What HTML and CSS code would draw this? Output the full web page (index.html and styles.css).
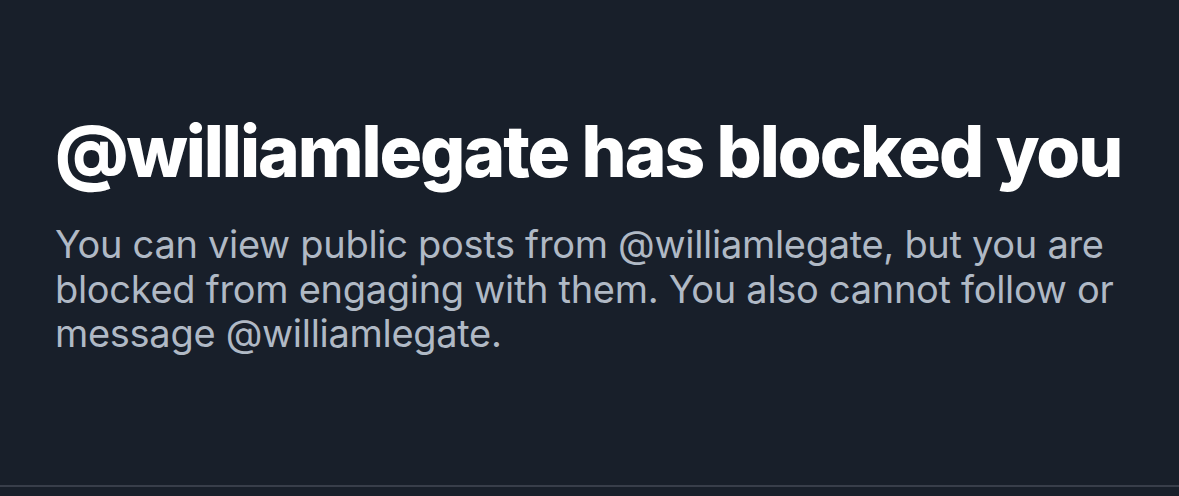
FILE: index.html
```html
<!DOCTYPE html>
<html>
<head>
<meta charset="utf-8">
<link rel="stylesheet" href="styles.css">
</head>
<body>
<main class="page">
  <section class="blocked">
    <h1 class="title">@williamlegate has blocked you</h1>
    <p class="desc">You can view public posts from @williamlegate, but you are blocked from engaging with them. You also cannot follow or message @williamlegate.</p>
  </section>
  <div class="divider"></div>
</main>
</body>
</html>
```
FILE: styles.css
```css
html, body {
  margin: 0;
  padding: 0;
  background: #181f2a;
}
.page {
  width: 1179px;
  height: 496px;
  display: flex;
  flex-direction: column;
}
.blocked {
  flex: 1;
  padding: 109px 40px 0 55px;
}
.title {
  margin: 0;
  font-family: Inter, "Liberation Sans", sans-serif;
  font-weight: 800;
  font-size: 71px;
  line-height: 84px;
  color: #ffffff;
  letter-spacing: -2.05px;
  white-space: nowrap;
}
.desc {
  margin: 29px 0 0;
  font-family: Inter, "Liberation Sans", sans-serif;
  font-weight: 400;
  font-size: 38px;
  line-height: 44.5px;
  letter-spacing: -0.3px;
  color: #b0b9c5;
}
.divider {
  height: 2px;
  background: #383e4a;
  margin-bottom: 9px;
}
```
